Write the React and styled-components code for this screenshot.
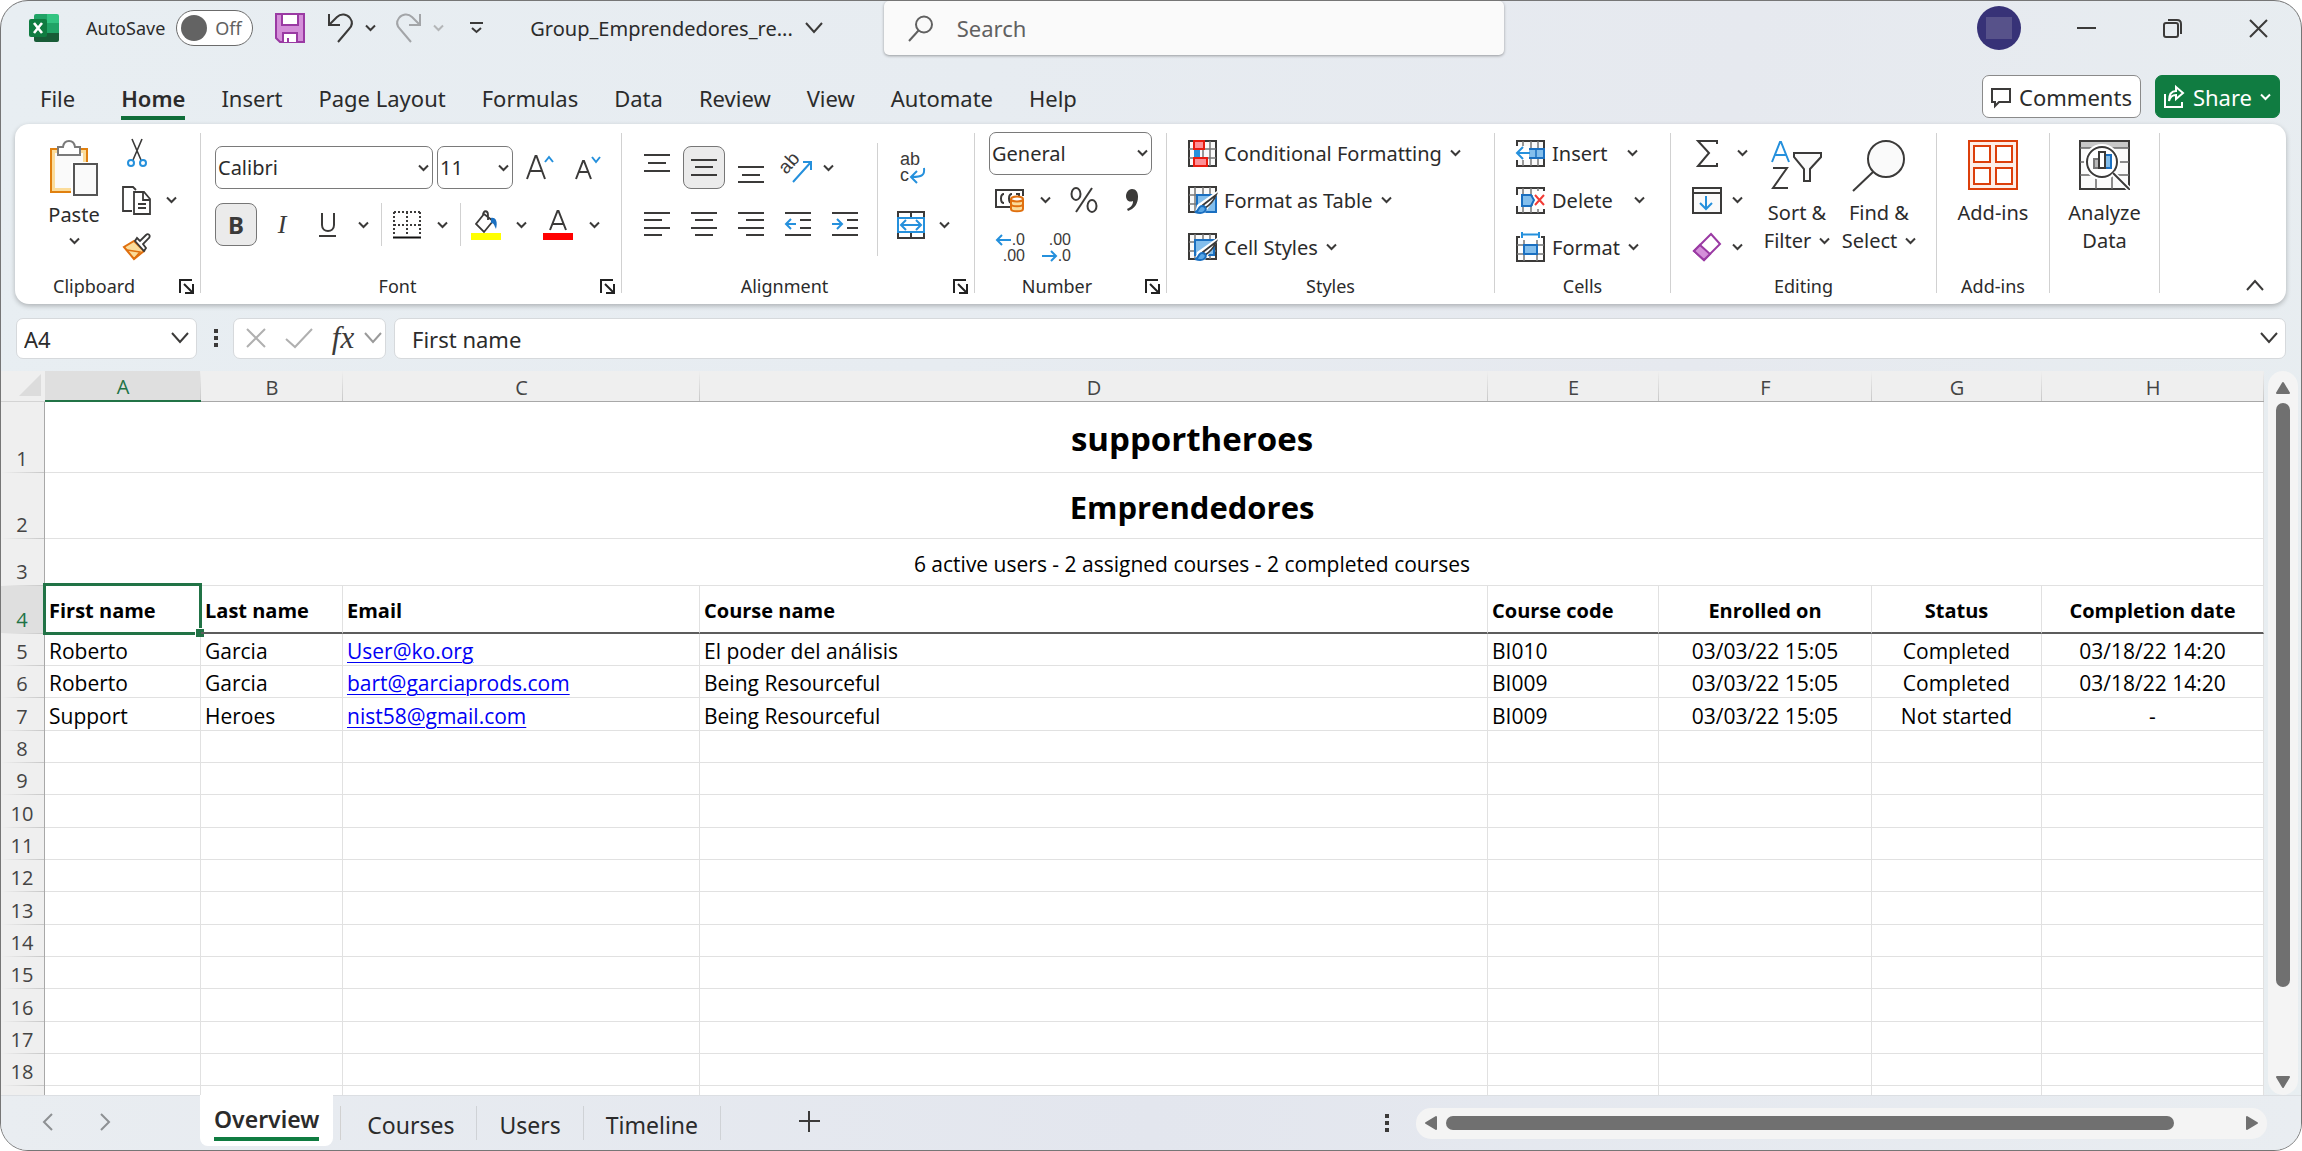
import React, { useState } from "react";
import styled, { createGlobalStyle, css } from "styled-components";

const ui = `"Noto Sans", "Open Sans", sans-serif`;
const cellFont = `"Open Sans", "Noto Sans", sans-serif`;
const iconFont = `"Liberation Sans", sans-serif`;
const ink = "#3b3a39";
const blue = "#2590dc";
const green = "#107c41";

const GlobalStyle = createGlobalStyle`
  * {
    box-sizing: border-box;
  }
  body {
    margin: 0;
    background: #fff;
    font-family: ${ui};
    color: #2b2b2b;
  }
  button, input, select {
    font-family: inherit;
    color: inherit;
    padding: 0;
    margin: 0;
    border: 0;
    background: none;
  }
  svg {
    display: block;
    flex: none;
    overflow: visible;
  }
`;

const Window = styled.div`
  display: flex;
  flex-direction: column;
  height: 100vh;
  border: 1px solid #767676;
  border-radius: 28px;
  overflow: hidden;
  background: linear-gradient(100deg, #e8eef2 0%, #e7ecf1 40%, #e6e9ef 70%, #e8eef1 100%);
`;

/* title bar */
const TitleBar = styled.header`
  display: flex;
  align-items: center;
  height: 54px;
  padding-left: 28px;
  font-size: 18px;
`;
const AutoSave = styled.label`
  display: flex;
  align-items: center;
  gap: 11px;
  margin: 0 10px 0 27px;
`;
const Track = styled.span`
  position: relative;
  display: flex;
  align-items: center;
  gap: 8px;
  width: 77px;
  height: 36px;
  padding-left: 4px;
  border: 1px solid #6b6b6b;
  border-radius: 18px;
  background: #fff;
  color: #616161;
  &::before {
    content: "";
    width: 26px;
    height: 26px;
    border-radius: 50%;
    background: #636363;
  }
`;
const TrackInput = styled.input`
  position: absolute;
  inset: 0;
  width: 100%;
  height: 100%;
  opacity: 0;
`;
const IconButton = styled.button`
  display: flex;
  flex: none;
  align-items: center;
  justify-content: center;
  width: ${({ $w }) => $w || 42}px;
  height: ${({ $h }) => $h || 42}px;
  ${({ $on }) =>
    $on &&
    css`
      background: #ebebeb;
      border: 1px solid #767676;
      border-radius: 8px;
    `}
`;
const SplitButton = styled.div`
  display: flex;
  margin-right: 8px;
`;
const FileName = styled.button`
  display: flex;
  align-items: center;
  gap: 12px;
  margin: 0 61px 0 31px;
  font-size: 20px;
  white-space: nowrap;
`;
const Search = styled.label`
  display: flex;
  align-items: center;
  gap: 24px;
  flex: 0 1 620px;
  height: 54px;
  padding-left: 24px;
  background: #fafafa;
  border-radius: 5px;
  box-shadow: 0 1px 3px rgba(0, 0, 0, 0.35);
`;
const SearchInput = styled.input`
  flex: 1;
  font-size: 22px;
  outline: none;
  &::placeholder {
    color: #616161;
    opacity: 1;
  }
`;
const Controls = styled.div`
  display: flex;
  align-items: center;
  margin-left: auto;
`;
const Avatar = styled.button`
  display: grid;
  place-items: center;
  width: 44px;
  height: 44px;
  margin-right: 22px;
  border-radius: 50%;
  background: #373277;
  &::before {
    content: "";
    width: 26px;
    height: 22px;
    background: #57528a;
  }
`;

/* tabs */
const TabBar = styled.nav`
  display: flex;
  align-items: center;
  height: 69px;
  padding: 0 21px 0 39px;
`;
const Tabs = styled.div`
  display: flex;
  gap: 36px;
  padding-top: 23px;
`;
const Tab = styled.button`
  font-size: 22px;
  line-height: 30px;
  padding-bottom: 3px;
  margin-left: ${({ $active }) => ($active ? 10 : 0)}px;
  font-weight: ${({ $active }) => ($active ? 600 : 400)};
  border-bottom: 4px solid ${({ $active }) => ($active ? "#0f6d39" : "transparent")};
`;
const TabActions = styled.div`
  display: flex;
  gap: 14px;
  margin-left: auto;
  padding-top: 14px;
`;
const Action = styled.button`
  display: flex;
  align-items: center;
  gap: 8px;
  height: 43px;
  padding: 0 8px;
  font-size: 22px;
  border-radius: 7px;
  border: 1px solid ${({ $primary }) => ($primary ? green : "#8a8a8a")};
  background: ${({ $primary }) => ($primary ? green : "#fff")};
  color: ${({ $primary }) => ($primary ? "#fff" : "#2b2b2b")};
`;

/* ribbon */
const Ribbon = styled.section`
  display: flex;
  margin: 0 15px 0 14px;
  padding: 9px 0 11px;
  height: 180px;
  flex: none;
  background: #fff;
  border-radius: 14px;
  box-shadow: 0 2px 5px rgba(0, 0, 0, 0.25);
`;
const Group = styled.div`
  display: flex;
  flex-direction: column;
  flex: none;
  width: ${({ $w }) => $w}px;
  border-right: 1px solid #d1d1d1;
`;
const Body = styled.div`
  display: flex;
  flex: 1;
  padding-left: ${({ $left }) => $left || 0}px;
`;
const Centered = styled(Body)`
  justify-content: center;
`;
const GroupFoot = styled.div`
  display: flex;
  align-items: center;
  height: 20px;
  margin-bottom: -3px;
  font-size: 18px;
`;
const GroupLabel = styled.span`
  flex: 1;
  text-align: center;
  line-height: 20px;
`;
const Rows = styled.div`
  display: flex;
  flex-direction: column;
  gap: 7px;
`;
const TwoRows = styled(Rows)`
  gap: 14px;
  padding-top: 13px;
`;
const Row = styled.div`
  display: flex;
  align-items: center;
  height: 40px;
`;
const TallRow = styled(Row)`
  height: 43px;
`;
const AlignRow = styled(TallRow)`
  gap: 5px;
  width: 241px;
`;
const Rule = styled.span`
  flex: none;
  width: 1px;
  height: ${({ $h }) => $h}px;
  margin: ${({ $h }) => ($h > 50 ? "10px 14px 0 0" : "0 4px")};
  background: #d1d1d1;
`;
const BigButton = styled.button`
  display: flex;
  flex-direction: column;
  align-items: center;
  width: ${({ $w }) => $w}px;
  padding-top: 7px;
  font-size: 20px;
  line-height: 28px;
  > svg:first-child {
    margin-bottom: 7px;
  }
`;
const PasteButton = styled(BigButton)`
  > svg:first-child {
    margin-bottom: 5px;
  }
`;
const PasteText = styled.span`
  padding-bottom: 8px;
`;
const TextLine = styled.span`
  display: flex;
  align-items: center;
  justify-content: center;
  gap: 8px;
`;
const ItemButton = styled.button`
  display: flex;
  align-items: center;
  gap: 7px;
  height: 40px;
  font-size: 20px;
  white-space: nowrap;
`;
const ItemText = styled.span`
  display: flex;
  align-items: center;
  gap: 8px;
`;
const Combo = styled.span`
  display: inline-grid;
  align-items: center;
  width: ${({ $w }) => $w}px;
  height: 43px;
  margin-right: 4px;
  svg {
    grid-area: 1 / 1;
    justify-self: end;
    margin-right: 4px;
    pointer-events: none;
  }
`;
const Select = styled.select`
  grid-area: 1 / 1;
  height: 43px;
  padding-left: 2px;
  appearance: none;
  border: 1px solid #7a7a7a;
  border-radius: 7px;
  background: #fff;
  font-size: 20px;
`;
const Letter = styled.span`
  font-size: ${({ $size }) => $size || 24}px;
  line-height: 26px;
  font-weight: ${({ $bold }) => ($bold ? 700 : 400)};
  font-style: ${({ $italic }) => ($italic ? "italic" : "normal")};
  font-family: ${({ $serif }) => ($serif ? `"Liberation Serif", serif` : ui)};
  color: ${ink};
`;
const Collapse = styled.button`
  align-self: flex-end;
  margin: 0 22px 2px auto;
`;

/* formula bar */
const FormulaBar = styled.div`
  display: flex;
  align-items: center;
  height: 67px;
  flex: none;
  padding: 1px 15px 0 15px;
`;
const Field = styled.div`
  display: flex;
  align-items: center;
  height: 41px;
  background: #fff;
  border: 1px solid #d6d9dc;
  border-radius: 7px;
  ${({ $w }) => ($w ? `width: ${$w}px;` : "flex: 1;")}
  margin-right: ${({ $gap }) => $gap || 0}px;
  padding: 0 ${({ $pad }) => $pad || 7}px;
`;
const FieldInput = styled.input`
  flex: 1;
  min-width: 0;
  font-size: 22px;
  padding-top: 2px;
  padding-left: ${({ $left }) => $left || 0}px;
  outline: none;
`;
const Grip = styled.span`
  margin-right: 14px;
`;

/* sheet */
const Sheet = styled.main`
  display: flex;
  flex: 1;
  min-height: 0;
`;
const Grid = styled.div`
  flex: 1;
  overflow: hidden;
  background: #fff;
`;
const Table = styled.table`
  width: 100%;
  table-layout: fixed;
  border-collapse: separate;
  border-spacing: 0;
  font-family: ${cellFont};
  color: #000;
`;
const Col = styled.col`
  width: ${({ $w }) => ($w ? `${$w}px` : "auto")};
`;
const ColHead = styled.th`
  height: 31px;
  padding: 3px 0 0;
  font-size: 20px;
  line-height: 26px;
  font-weight: 400;
  color: ${({ $active }) => ($active ? "#217346" : "#444")};
  border-bottom: ${({ $active }) => ($active ? "2px solid #217346" : "1px solid #a8a8a8")};
  background: linear-gradient(#efefef, #c8c8c8) right / 1px 100% no-repeat,
    ${({ $active }) => ($active ? "#dfdfdf" : "#efefef")};
`;
const Corner = styled.th`
  padding: 0 4px 2px 0;
  background: #efefef;
  border-bottom: 1px solid #d4d4d4;
  svg {
    margin-left: auto;
  }
`;
const RowHead = styled.th`
  height: ${({ $h }) => $h}px;
  padding: 0 1px 0 0;
  vertical-align: bottom;
  font-size: 20px;
  line-height: 28px;
  font-weight: 400;
  color: ${({ $active }) => ($active ? "#217346" : "#444")};
  border-right: 1px solid #a8a8a8;
  background: linear-gradient(90deg, #efefef, #c8c8c8) bottom / 100% 1px no-repeat,
    ${({ $active }) => ($active ? "#dfdfdf" : "#efefef")};
`;
const Cell = styled.td`
  padding: 3px 4px 0;
  font-size: 21px;
  line-height: 26px;
  white-space: nowrap;
  text-align: ${({ $center }) => ($center ? "center" : "left")};
  border-right: 1px solid #e1e1e1;
  border-bottom: 1px solid #e1e1e1;
`;
const HeadCell = styled(Cell)`
  position: relative;
  font-size: 20px;
  font-weight: 700;
  border-bottom: 2px solid #5c5c5c;
`;
/* the merge runs on into the column beyond the right edge */
const MergedCell = styled(Cell)`
  padding: 3px 0 0 76px;
  text-align: center;
  font-size: ${({ $size }) => $size}px;
  font-weight: ${({ $bold }) => ($bold ? 700 : 400)};
`;
const Selection = styled.span`
  position: absolute;
  inset: -3px -2px -3px -2px;
  border: 3px solid #217346;
  &::after {
    content: "";
    position: absolute;
    right: -5px;
    bottom: -5px;
    width: 8px;
    height: 8px;
    background: #217346;
    border: solid #fff;
    border-width: 1px 0 0 1px;
  }
`;
const MailLink = styled.a`
  color: #0000f5;
  text-decoration: underline;
  text-decoration-thickness: 1px;
  text-underline-offset: 3px;
`;

/* scroll bars */
const VScroll = styled.div`
  display: flex;
  flex-direction: column;
  align-items: center;
  justify-content: space-between;
  width: 30px;
  margin: 0 3px 0 4px;
  padding: 10px 0 6px;
  border-radius: 15px;
  background: #f4f4f4;
`;
const HScroll = styled.div`
  display: flex;
  align-items: center;
  justify-content: space-between;
  flex: 0 1 851px;
  height: 31px;
  padding: 0 8px;
  border-radius: 15px;
  background: #f4f4f4;
`;
const Rail = styled.div`
  display: flex;
  flex-direction: ${({ $vertical }) => ($vertical ? "column" : "row")};
  flex: 1;
  margin: ${({ $vertical }) => ($vertical ? "8px 0" : "0 8px")};
`;
const Thumb = styled.div`
  flex: 0 0 ${({ $size }) => $size}%;
  min-width: 14px;
  min-height: 14px;
  border-radius: 7px;
  background: #707070;
`;

/* sheet tabs */
const Footer = styled.footer`
  display: flex;
  align-items: center;
  height: 55px;
  flex: none;
  padding-right: 34px;
  background: linear-gradient(90deg, #e9edf1, #e3e6ee 50%, #e9edf1);
  border-top: 1px solid #dcdfe3;
`;
const Pager = styled.div`
  display: flex;
  width: 199px;
  padding: 0 0 2px 24px;
  gap: 14px;
`;
const SheetTab = styled.button`
  height: 34px;
  padding: 4px 22px 0;
  font-size: 23px;
  line-height: 30px;
  border-right: 1px solid #cfd2d6;
`;
const ActiveTab = styled.button`
  align-self: flex-start;
  height: 51px;
  margin: -1px 3px 0 0;
  padding: 0 14px 2px;
  background: #fff;
  border-radius: 0 0 8px 8px;
  font-size: 23px;
  font-weight: 600;
`;
const Underlined = styled.span`
  display: block;
  line-height: 30px;
  padding: 5px 0 3px;
  border-bottom: 4px solid ${green};
`;
const NewSheet = styled.button`
  margin: 0 auto 3px 78px;
`;
const ScrollDots = styled.span`
  margin-right: 26px;
`;

const Svg = ({ w = 29, h = 27, vb, children, ...rest }) => (
  <svg
    width={w}
    height={h}
    viewBox={vb || `0 0 ${w} ${h}`}
    fill="none"
    stroke={ink}
    strokeWidth="2"
    aria-hidden="true"
    {...rest}
  >
    {children}
  </svg>
);

const Chevron = ({ color = ink, size = 11 }) => (
  <Svg w={size} h={8} vb="0 0 11 8" stroke={color} strokeWidth={2}>
    <path d="M1 1.5 5.5 6 10 1.5" />
  </Svg>
);
const WideChevron = ({ color = ink, flip }) => (
  <Svg w={18} h={12} stroke={color} strokeWidth={2}>
    <path d={flip ? "M1 11 9 2 17 11" : "M1 1 9 10 17 1"} />
  </Svg>
);
const Dots = () => (
  <Svg w={5} h={20} stroke="none" fill={ink}>
    <path d="M0 1h4v4H0zM0 8h4v4H0zM0 15h4v4H0z" />
  </Svg>
);
const Triangle = ({ d }) => (
  <Svg w={14} h={14} fill="#707070" stroke="#707070" strokeLinejoin="round">
    <path d={d} />
  </Svg>
);
const IconText = ({ children, ...rest }) => (
  <text fontFamily={iconFont} fontSize="14" fill={ink} stroke="none" {...rest}>
    {children}
  </text>
);

const ExcelLogo = () => (
  <Svg w={30} h={30} stroke="none">
    <path d="M7 1h12v9H5V3q0-2 2-2z" fill="#21a366" />
    <path d="M18 1h10q2 0 2 2v7H18z" fill="#33c481" />
    <path d="M5 10h13v10H5z" fill="#107c41" />
    <path d="M18 10h12v10H18z" fill="#21a366" />
    <path d="M5 20h25v7q0 2-2 2H7q-2 0-2-2z" fill="#185c37" />
    <path d="M18 20V10h-4v10z" fill="#107c41" />
    <rect y="6" width="18" height="18" rx="2" fill="#107c41" />
    <path d="m5 10 8 10M13 10 5 20" stroke="#fff" strokeWidth="2.6" />
  </Svg>
);
const SaveIcon = () => (
  <Svg w={30} h={30} stroke="#9a3aa3" fill="#d48fd9">
    <path d="M1 1h28v28H5l-4-4z" />
    <path d="M7 1h16v11H7z" fill="#fff" />
    <path d="M8 29v-9h14v9M13 29v-4" fill="#fff" />
  </Svg>
);
const UndoIcon = () => (
  <Svg w={27} h={30}>
    <path d="M2 1v11h11M2 12 10 4c4-4 10-3 13 1s2 8-1 11L11 29" />
  </Svg>
);
const RedoIcon = () => (
  <Svg w={27} h={30} stroke="#a3a5a8">
    <path d="M25 1v11H14M25 12l-8-8c-4-4-10-3-13 1s-2 8 1 11l11 13" />
  </Svg>
);
const SearchIcon = () => (
  <Svg w={25} h={27} stroke="#616161">
    <circle cx="16" cy="9.5" r="8" />
    <path d="M10.5 15.5 1 26" />
  </Svg>
);
const PasteIcon = () => (
  <Svg w={50} h={56}>
    <path d="M2 9h36v43H2z" fill="#fbdc9b" stroke="#e0800f" />
    <path d="M6 13h28v35H6z" fill="#fafafa" stroke="none" />
    <path d="M9 7h5c1-8 11-8 12 0h5v8H9z" fill="#fff" stroke="#7a7a7a" />
    <path d="M22 22h28v34H22z" fill="#fff" stroke="none" />
    <path d="M25 24h23v31H25z" fill="#fafafa" stroke="#555" />
  </Svg>
);
const CutIcon = () => (
  <Svg w={20} h={28} strokeWidth="1.6">
    <path d="M5 0 14 21M15 0 6 21" />
    <circle cx="4" cy="24" r="3" stroke={blue} strokeWidth="2" />
    <circle cx="16" cy="24" r="3" stroke={blue} strokeWidth="2" />
  </Svg>
);
const CopyIcon = () => (
  <Svg w={30} h={29} strokeWidth="1.8">
    <path d="M10 25H1V1h10l3 3" />
    <path d="M12 6h10l6 7v15H12zM21 6v8h7M16 18h8M16 22h8" />
  </Svg>
);
const BrushIcon = () => (
  <Svg w={30} h={28}>
    <path d="M2 14 12 26 22 18 12 8z" fill="#fbdc9b" stroke="#e0700f" />
    <path d="m5 17 13 2-6 7" stroke="#e0700f" strokeWidth="1.6" />
    <path d="M13 8 22 18l2-3-3-4 6-6c2-3-1-5-3-3l-6 6-3-3z" fill="#fff" strokeWidth="1.8" />
  </Svg>
);
const Launcher = () => (
  <Svg w={15} h={15} stroke="#222">
    <path d="M1 14V1h12M5 5l8 8M14 5v9H6" />
  </Svg>
);
const BordersIcon = () => (
  <Svg w={28} h={28}>
    <path d="M1 1h26M1 14h26M1 1v23M14 1v23M27 1v23" strokeDasharray="2 2" />
    <path d="M0 26.5h28" stroke="#111" />
  </Svg>
);
const FillIcon = () => (
  <Svg w={30} h={30}>
    <path d="M13 4 5 14l8 8 9-11zM12 5c0-5 5-5 5 0v5" strokeWidth="1.8" />
    <path d="M20 8c5-1 7 4 5 11-2-4-2-6-5-6z" fill="#1a6fc0" stroke="none" />
    <path d="M0 23h30v7H0z" fill="#ffff00" stroke="none" />
  </Svg>
);
const FontColorIcon = () => (
  <Svg w={30} h={30}>
    <path d="M7 20 14.5 1h1L23 20M9.5 14h11" />
    <path d="M0 23h30v7H0z" fill="#ff0000" stroke="none" />
  </Svg>
);
const GrowIcon = () => (
  <Svg w={28} h={26}>
    <path d="M1 24 9.5 1h1L19 24M4 16h12" />
    <path d="m19 7 4-5 4 5" stroke={blue} />
  </Svg>
);
const ShrinkIcon = () => (
  <Svg w={26} h={26}>
    <path d="M1 24 8 6h1l7 18M4 17h9" />
    <path d="m17 2 4 5 4-5" stroke={blue} />
  </Svg>
);

const lineSets = {
  top: [[0, 26, 1], [4, 18, 9], [0, 26, 17]],
  middle: [[0, 26, 6], [4, 18, 13], [0, 26, 21]],
  bottom: [[0, 26, 13], [4, 18, 21], [0, 26, 28]],
  left: [[0, 26, 2], [0, 18, 9], [0, 26, 17], [0, 18, 24]],
  center: [[0, 26, 2], [4, 18, 9], [0, 26, 17], [4, 18, 24]],
  right: [[0, 26, 2], [8, 18, 9], [0, 26, 17], [8, 18, 24]],
  indent: [[0, 26, 2], [15, 11, 9], [15, 11, 17], [0, 26, 24]],
};
const LinesIcon = ({ kind, children }) => (
  <Svg w={26} h={30}>
    <path d={lineSets[kind].map(([x, w, y]) => `M${x} ${y + 1}h${w}`).join("")} />
    {children}
  </Svg>
);
const OrientIcon = () => (
  <Svg w={31} h={31}>
    <IconText x="2" y="20" transform="rotate(-48 6 20)" fontSize="19">ab</IconText>
    <path d="M10 30 28 10M20 10h8v8" stroke={blue} />
  </Svg>
);
const WrapIcon = () => (
  <Svg w={26} h={33}>
    <IconText x="0" y="14" fontSize="18">ab</IconText>
    <IconText x="0" y="30" fontSize="18">c</IconText>
    <path d="M24 17c1 7-2 9-12 9M17 20l-6 6 6 6" stroke={blue} />
  </Svg>
);
const MergeIcon = () => (
  <Svg w={28} h={28}>
    <path d="M1 1h26v26H1zM14 1v6M14 21v6" />
    <path d="M1 7h26v14H1z" fill="#fff" stroke={blue} />
    <path d="M5 14h18M9 9l-5 5 5 5M19 9l5 5-5 5" stroke={blue} />
  </Svg>
);
const MoneyIcon = () => (
  <Svg w={30} h={25}>
    <path d="M28 8V2H1v17h14M9 6C5 6 5 15 9 15M17 6c-4 0-4 9 0 9" />
    <path d="M21 6h3v3" />
    <path d="M16 11v10c0 3 12 3 12 0V11" fill="#fbdc9b" stroke="#e0700f" />
    <ellipse cx="22" cy="11" rx="6" ry="2.5" fill="#fff" stroke="#e0700f" />
    <path d="M16 16c0 3 12 3 12 0" stroke="#e0700f" />
  </Svg>
);
const PercentIcon = () => (
  <Svg w={28} h={26}>
    <ellipse cx="6" cy="7" rx="4.5" ry="6" />
    <ellipse cx="22" cy="19" rx="4.5" ry="6" />
    <path d="M22 1 6 25" />
  </Svg>
);
const CommaIcon = () => (
  <Svg w={14} h={24} fill={ink} stroke="none">
    <path d="M7 1c4 0 6 3 6 8 0 7-4 12-10 14l-1-2c4-2 6-4 6-8-5 2-7-2-7-5s2-7 6-7z" />
  </Svg>
);
const DecimalIcon = ({ more }) => (
  <Svg w={29} h={33}>
    <IconText x="29" y="14" fontSize="16" textAnchor="end">{more ? ".0" : ".00"}</IconText>
    <IconText x="29" y="30" fontSize="16" textAnchor="end">{more ? ".00" : ".0"}</IconText>
    <path d={more ? "M15 9H1M6 4 1 9l5 5" : "M0 25h14M9 20l5 5-5 5"} stroke={blue} />
  </Svg>
);
const GridBase = () => (
  <>
    <path d="M1 1h27v25H1z" fill="#fafafa" />
    <path d="M7 1v25M15 1v25M22 1v25M1 9h27M1 18h27" stroke="#777" strokeWidth="1.5" />
  </>
);
const CondIcon = () => (
  <Svg>
    <GridBase />
    <path d="M6 1h10v8H6zM6 18h13v8H6z" fill="#fd9096" stroke="#e81c10" />
    <path d="M6 10h6v7H6z" fill={blue} stroke="none" />
  </Svg>
);
const PenShape = () => (
  <>
    <path d="M29 5v4L17 27H7l2-8z" fill="#fff" stroke="none" />
    <path d="M28 9 15 19l2 3c5-3 9-8 11-13z" fill="#fff" strokeWidth="1.8" />
    <path d="M7 26c4 0 3-6 7-6s5 4 2 6-6 1-9 0z" fill="#5aa7e6" stroke="#1a6fc0" />
  </>
);
const TableFmtIcon = () => (
  <Svg h={28}>
    <GridBase />
    <path d="M9 9h19v17H9z" fill="#83beec" stroke="#1a6fc0" />
    <PenShape />
  </Svg>
);
const CellStyleIcon = () => (
  <Svg h={28}>
    <GridBase />
    <path d="M7 7h19v15H7z" fill="#83beec" stroke="#1a6fc0" />
    <PenShape />
  </Svg>
);
const InsertIcon = () => (
  <Svg>
    <GridBase />
    <path d="M12 9h16v9H12z" fill="#83beec" stroke="#1a6fc0" />
    <path d="M20 9v9" stroke="#1a6fc0" strokeWidth="1.5" />
    <path d="M0 6h13v14H0z" fill="#fff" stroke="none" />
    <path d="M1 13h13M7 7l-6 6 6 6" stroke={blue} />
  </Svg>
);
const DeleteIcon = () => (
  <Svg>
    <GridBase />
    <path d="M0 8h5v11H0zM17 4h12v18H17z" fill="#fff" stroke="none" />
    <path d="M6 8h9l3 5-3 6H6z" fill="#83beec" stroke="#1a6fc0" />
    <path d="m19 8 9 10M28 8l-9 10" stroke="#f23c36" />
  </Svg>
);
const FormatIcon = () => (
  <Svg h={30}>
    <path d="M4 5H1v24h27V5h-3" />
    <path d="M8 8v21M21 8v21M1 13h27M1 22h27" stroke="#777" strokeWidth="1.5" />
    <path d="M8 13h13v9H8z" fill="#83beec" stroke="#1a6fc0" />
    <path d="M6 2.5h17M6 0v6M23 0v6" stroke={blue} />
  </Svg>
);
const SumIcon = () => (
  <Svg w={22} h={27}>
    <path d="M21 4V1H2l11 12L2 26h19v-3" />
  </Svg>
);
const FillDownIcon = () => (
  <Svg w={30} h={27}>
    <path d="M1 1h28v25H1zM1 6h28" fill="#fafafa" />
    <path d="M14 9v13M8 16l6 6 6-6" stroke={blue} />
  </Svg>
);
const EraserIcon = () => (
  <Svg w={28} h={28} stroke="#9a3aa3">
    <path d="M18 1 27 11 11 27 1 18z" fill="#fff" />
    <path d="M7 12 17 21 11 27 1 18z" fill="#d48fd9" />
  </Svg>
);
const SortIcon = () => (
  <Svg w={52} h={52}>
    <path d="M1 22 9 2h1l8 20M4 15h11" stroke={blue} />
    <path d="M2 28h14L2 48h15" />
    <path d="M23 13h27v4L39 29v12h-6V29L23 17z" fill="#fafafa" />
  </Svg>
);
const FindIcon = () => (
  <Svg w={54} h={52}>
    <circle cx="34" cy="19" r="18" fill="#fafafa" />
    <path d="M21 32 1 51" />
  </Svg>
);
const AddInsIcon = () => (
  <Svg w={50} h={52} stroke="#dc3f0b">
    <path d="M1 1h48v48H1z" fill="#fdeee8" />
    <path d="M6 6h16v16H6zM28 6h16v16H28zM6 28h16v16H6zM28 28h16v16H28z" fill="#fff" />
  </Svg>
);
const AnalyzeIcon = () => (
  <Svg w={51} h={52}>
    <path d="M1 1h49v48H1z" fill="#fafafa" />
    <path d="M2 2h47v6H2z" fill="#c8c8c8" stroke="none" />
    <path d="M1 8h49M1 22h49M1 35h49M17 35v14M33 35v14" strokeWidth="1.5" stroke="#666" />
    <circle cx="23" cy="22" r="18" fill="#fff" stroke="none" />
    <circle cx="23" cy="22" r="15" fill="#fff" />
    <path d="M15 19h5v9h-5z" fill="#b8b8b8" stroke="#777" />
    <path d="M26 15h6v13h-6z" fill="#83beec" stroke="#1a6fc0" />
    <path d="M20 12h6v16h-6z" fill="#fff" />
    <path d="m34 33 16 16" stroke="#fff" strokeWidth="5" />
    <path d="m34 33 16 16" />
  </Svg>
);

const columns = [
  { id: "A", w: 156 },
  { id: "B", w: 142 },
  { id: "C", w: 357 },
  { id: "D" },
  { id: "E", w: 171 },
  { id: "F", w: 213 },
  { id: "G", w: 170 },
  { id: "H", w: 222 },
];
const headings = [
  "First name", "Last name", "Email", "Course name",
  "Course code", "Enrolled on", "Status", "Completion date",
];
const people = [
  ["Roberto", "Garcia", "User@ko.org", "El poder del análisis", "BI010", "03/03/22 15:05", "Completed", "03/18/22 14:20"],
  ["Roberto", "Garcia", "bart@garciaprods.com", "Being Resourceful", "BI009", "03/03/22 15:05", "Completed", "03/18/22 14:20"],
  ["Support", "Heroes", "nist58@gmail.com", "Being Resourceful", "BI009", "03/03/22 15:05", "Not started", "-"],
];
const lastRow = 18;
const rowHeight = (n) => (n % 3 === 1 ? 33 : 32);
const tabs = ["File", "Home", "Insert", "Page Layout", "Formulas", "Data", "Review", "View", "Automate", "Help"];

const Tool = ({ label, ...rest }) => <IconButton aria-label={label} title={label} {...rest} />;
const Arrow = ({ label, w = 28, color }) => (
  <IconButton aria-label={label} $w={w}>
    <Chevron color={color} />
  </IconButton>
);
const Foot = ({ children, launcher }) => (
  <GroupFoot>
    <GroupLabel>{children}</GroupLabel>
    {launcher && (
      <IconButton aria-label={`${children} settings`} $w={27} $h={20}>
        <Launcher />
      </IconButton>
    )}
  </GroupFoot>
);
const Dropdown = ({ label, w, options }) => (
  <Combo $w={w}>
    <Select aria-label={label}>
      {options.map((o) => (
        <option key={o}>{o}</option>
      ))}
    </Select>
    <Chevron />
  </Combo>
);

const RibbonGroups = () => (
  <Ribbon>
    <Group $w={186}>
      <Body $left={26}>
        <PasteButton $w={66}>
          <PasteIcon />
          <PasteText>Paste</PasteText>
          <Chevron />
        </PasteButton>
        <Rows>
          <Row><Tool label="Cut" $w={60}><CutIcon /></Tool></Row>
          <Row>
            <Tool label="Copy" $w={60}><CopyIcon /></Tool>
            <Arrow label="Copy options" w={8} />
          </Row>
          <Row><Tool label="Format Painter" $w={60}><BrushIcon /></Tool></Row>
        </Rows>
      </Body>
      <Foot launcher>Clipboard</Foot>
    </Group>

    <Group $w={421}>
      <Body $left={14}>
        <TwoRows>
          <TallRow>
            <Dropdown label="Font" w={218} options={["Calibri", "Arial"]} />
            <Dropdown label="Font size" w={76} options={["11", "12", "14"]} />
            <Tool label="Increase Font Size" $w={46}><GrowIcon /></Tool>
            <Tool label="Decrease Font Size" $w={50}><ShrinkIcon /></Tool>
          </TallRow>
          <TallRow>
            <Tool label="Bold" $on $h={43}><Letter $bold>B</Letter></Tool>
            <Tool label="Italic" $w={50}><Letter $serif $italic $size={26}>I</Letter></Tool>
            <Tool label="Underline">
              <Svg w={18} h={26}><path d="M3 1v12c0 8 12 8 12 0V1M0 24h17" /></Svg>
            </Tool>
            <Arrow label="Underline options" />
            <Rule $h={43} />
            <Tool label="Borders"><BordersIcon /></Tool>
            <Arrow label="Border options" />
            <Rule $h={43} />
            <Tool label="Fill Color"><FillIcon /></Tool>
            <Arrow label="Fill options" />
            <Tool label="Font Color" $w={46}><FontColorIcon /></Tool>
            <Arrow label="Font color options" w={26} />
          </TallRow>
        </TwoRows>
      </Body>
      <Foot launcher>Font</Foot>
    </Group>

    <Group $w={353}>
      <Body $left={14}>
        <TwoRows>
          <AlignRow>
            <Tool label="Top Align"><LinesIcon kind="top" /></Tool>
            <Tool label="Middle Align" $on $h={43}><LinesIcon kind="middle" /></Tool>
            <Tool label="Bottom Align"><LinesIcon kind="bottom" /></Tool>
            <Tool label="Orientation"><OrientIcon /></Tool>
            <Arrow label="Orientation options" w={9} />
          </AlignRow>
          <AlignRow>
            <Tool label="Align Left"><LinesIcon kind="left" /></Tool>
            <Tool label="Center"><LinesIcon kind="center" /></Tool>
            <Tool label="Align Right"><LinesIcon kind="right" /></Tool>
            <Tool label="Decrease Indent">
              <LinesIcon kind="indent"><path d="M11 14H1M6 9l-5 5 5 5" stroke={blue} /></LinesIcon>
            </Tool>
            <Tool label="Increase Indent">
              <LinesIcon kind="indent"><path d="M0 14h10M5 9l5 5-5 5" stroke={blue} /></LinesIcon>
            </Tool>
          </AlignRow>
        </TwoRows>
        <Rule $h={113} />
        <TwoRows>
          <TallRow><Tool label="Wrap Text"><WrapIcon /></Tool></TallRow>
          <TallRow>
            <Tool label="Merge & Center" $w={38}><MergeIcon /></Tool>
            <Arrow label="Merge options" />
          </TallRow>
        </TwoRows>
      </Body>
      <Foot launcher>Alignment</Foot>
    </Group>

    <Group $w={192}>
      <Body $left={14}>
        <Rows>
          <Row><Dropdown label="Number format" w={163} options={["General", "Number"]} /></Row>
          <Row>
            <Tool label="Accounting"><MoneyIcon /></Tool>
            <Arrow label="Accounting options" />
            <Tool label="Percent" $w={50}><PercentIcon /></Tool>
            <Tool label="Comma" $w={46}><CommaIcon /></Tool>
          </Row>
          <Row>
            <Tool label="Increase Decimal"><DecimalIcon more /></Tool>
            <Tool label="Decrease Decimal" $w={50}><DecimalIcon /></Tool>
          </Row>
        </Rows>
      </Body>
      <Foot launcher>Number</Foot>
    </Group>

    <Group $w={328}>
      <Body $left={21}>
        <Rows>
          <ItemButton><CondIcon /><ItemText>Conditional Formatting <Chevron /></ItemText></ItemButton>
          <ItemButton><TableFmtIcon /><ItemText>Format as Table <Chevron /></ItemText></ItemButton>
          <ItemButton><CellStyleIcon /><ItemText>Cell Styles <Chevron /></ItemText></ItemButton>
        </Rows>
      </Body>
      <Foot>Styles</Foot>
    </Group>

    <Group $w={176}>
      <Body $left={21}>
        <Rows>
          <Row>
            <ItemButton><InsertIcon />Insert</ItemButton>
            <Arrow label="Insert options" w={50} />
          </Row>
          <Row>
            <ItemButton><DeleteIcon />Delete</ItemButton>
            <Arrow label="Delete options" w={54} />
          </Row>
          <ItemButton><FormatIcon /><ItemText>Format <Chevron /></ItemText></ItemButton>
        </Rows>
      </Body>
      <Foot>Cells</Foot>
    </Group>

    <Group $w={266}>
      <Body $left={15}>
        <Rows>
          <Row><Tool label="AutoSum"><SumIcon /></Tool><Arrow label="Sum options" /></Row>
          <Row><Tool label="Fill"><FillDownIcon /></Tool><Arrow label="Fill options" w={18} /></Row>
          <Row><Tool label="Clear"><EraserIcon /></Tool><Arrow label="Clear options" w={18} /></Row>
        </Rows>
        <BigButton $w={82}>
          <SortIcon />
          <TextLine>Sort &amp;</TextLine>
          <TextLine>Filter <Chevron /></TextLine>
        </BigButton>
        <BigButton $w={82}>
          <FindIcon />
          <TextLine>Find &amp;</TextLine>
          <TextLine>Select <Chevron /></TextLine>
        </BigButton>
      </Body>
      <Foot>Editing</Foot>
    </Group>

    <Group $w={113}>
      <Centered>
        <BigButton $w={84}><AddInsIcon /><TextLine>Add-ins</TextLine></BigButton>
      </Centered>
      <Foot>Add-ins</Foot>
    </Group>

    <Group $w={110}>
      <Centered>
        <BigButton $w={84}><AnalyzeIcon /><TextLine>Analyze</TextLine><TextLine>Data</TextLine></BigButton>
      </Centered>
    </Group>

    <Collapse aria-label="Collapse ribbon"><WideChevron flip /></Collapse>
  </Ribbon>
);

const renderValue = (value, col) => (col === 2 ? <MailLink href={`mailto:${value}`}>{value}</MailLink> : value);

const Spreadsheet = () => {
  const rows = [];
  for (let n = 5; n <= lastRow; n++) rows.push(n);

  return (
    <Table>
      <colgroup>
        <Col $w={44} />
        {columns.map((c) => (
          <Col key={c.id} $w={c.w} />
        ))}
      </colgroup>
      <thead>
        <tr>
          <Corner aria-label="Select all">
            <Svg w={22} h={22} stroke="none" fill="#dcdcdc"><path d="M22 0v22H0z" /></Svg>
          </Corner>
          {columns.map((c) => (
            <ColHead key={c.id} $active={c.id === "A"}>{c.id}</ColHead>
          ))}
        </tr>
      </thead>
      <tbody>
        <tr>
          <RowHead $h={71}>1</RowHead>
          <MergedCell colSpan={8} $size={33} $bold>supportheroes</MergedCell>
        </tr>
        <tr>
          <RowHead $h={66}>2</RowHead>
          <MergedCell colSpan={8} $size={31} $bold>Emprendedores</MergedCell>
        </tr>
        <tr>
          <RowHead $h={47}>3</RowHead>
          <MergedCell colSpan={8} $size={21}>6 active users - 2 assigned courses - 2 completed courses</MergedCell>
        </tr>
        <tr>
          <RowHead $h={48} $active>4</RowHead>
          {headings.map((text, i) => (
            <HeadCell key={text} $center={i > 4}>
              {text}
              {i === 0 && <Selection />}
            </HeadCell>
          ))}
        </tr>
        {rows.map((n) => (
          <tr key={n}>
            <RowHead $h={rowHeight(n)}>{n}</RowHead>
            {columns.map((c, i) => (
              <Cell key={c.id} $center={i > 4}>
                {people[n - 5] && renderValue(people[n - 5][i], i)}
              </Cell>
            ))}
          </tr>
        ))}
        <tr>
          <RowHead $h={32} />
          {columns.map((c) => (
            <Cell key={c.id} />
          ))}
        </tr>
      </tbody>
    </Table>
  );
};

const App = () => {
  const [active, setActive] = useState("Home");

  return (
    <Window>
      <GlobalStyle />
      <TitleBar>
        <ExcelLogo />
        <AutoSave>
          AutoSave
          <Track>
            Off
            <TrackInput type="checkbox" />
          </Track>
        </AutoSave>
        <Tool label="Save" $w={54}><SaveIcon /></Tool>
        <SplitButton>
          <Tool label="Undo" $w={46}><UndoIcon /></Tool>
          <Arrow label="Undo options" w={14} />
        </SplitButton>
        <SplitButton>
          <Tool label="Redo" $w={46}><RedoIcon /></Tool>
          <Arrow label="Redo options" w={14} color="#b4b6b8" />
        </SplitButton>
        <Tool label="Customize toolbar" $w={46}>
          <Svg w={13} h={12}><path d="M0 1h13M2 6l4.5 4L11 6" /></Svg>
        </Tool>
        <FileName>
          Group_Emprendedores_re... <WideChevron />
        </FileName>
        <Search>
          <SearchIcon />
          <SearchInput type="text" placeholder="Search" aria-label="Search" />
        </Search>
        <Controls>
          <Avatar aria-label="Account" />
          <Tool label="Minimize" $w={86}><Svg w={19} h={18}><path d="M0 9h19" /></Svg></Tool>
          <Tool label="Restore" $w={86}>
            <Svg w={19} h={20}><rect x="1" y="5" width="14" height="14" rx="2" /><path d="M5 2h9q4 0 4 4v10" /></Svg>
          </Tool>
          <Tool label="Close" $w={86}><Svg w={19} h={19}><path d="m1 1 17 17M18 1 1 18" /></Svg></Tool>
        </Controls>
      </TitleBar>

      <TabBar>
        <Tabs>
          {tabs.map((t) => (
            <Tab key={t} $active={t === active} onClick={() => setActive(t)}>{t}</Tab>
          ))}
        </Tabs>
        <TabActions>
          <Action>
            <Svg w={20} h={20}><path d="M1 2h18v13H8l-4 4v-4H1z" /></Svg>
            Comments
          </Action>
          <Action $primary>
            <Svg w={21} h={22} stroke="#fff"><path d="M1 8v13h17v-5M12 1l7 6-7 6V9C8 9 6 11 5 15c0-6 2-10 7-10z" /></Svg>
            Share <Chevron color="#fff" />
          </Action>
        </TabActions>
      </TabBar>

      <RibbonGroups />

      <FormulaBar>
        <Field $w={181} $gap={17}>
          <FieldInput aria-label="Name box" defaultValue="A4" />
          <WideChevron />
        </Field>
        <Grip><Dots /></Grip>
        <Field $w={153} $gap={8} $pad={2}>
          <IconButton aria-label="Cancel" $w={40} $h={38}>
            <Svg w={20} h={20} stroke="#b0b0b0"><path d="m1 1 18 18M19 1 1 19" /></Svg>
          </IconButton>
          <IconButton aria-label="Enter" $w={46} $h={38}>
            <Svg w={28} h={20} stroke="#b0b0b0"><path d="m1 11 9 8L27 1" /></Svg>
          </IconButton>
          <IconButton aria-label="Insert function" $w={42} $h={38}>
            <Letter $serif $italic $size={31}>fx</Letter>
          </IconButton>
          <WideChevron color="#9a9a9a" />
        </Field>
        <Field>
          <FieldInput aria-label="Formula bar" defaultValue="First name" $left={10} />
          <WideChevron />
        </Field>
      </FormulaBar>

      <Sheet>
        <Grid>
          <Spreadsheet />
        </Grid>
        <VScroll>
          <Triangle d="M7 2 13 12H1z" />
          <Rail $vertical><Thumb $size={88} /></Rail>
          <Triangle d="M1 2h12L7 12z" />
        </VScroll>
      </Sheet>

      <Footer>
        <Pager>
          <Tool label="Previous sheet" $w={44}><Svg w={11} h={18} stroke="#8d9093"><path d="M10 1 2 9l8 8" /></Svg></Tool>
          <Tool label="Next sheet" $w={44}><Svg w={11} h={18} stroke="#8d9093"><path d="m1 1 8 8-8 8" /></Svg></Tool>
        </Pager>
        <ActiveTab><Underlined>Overview</Underlined></ActiveTab>
        <Rule $h={34} />
        <SheetTab>Courses</SheetTab>
        <SheetTab>Users</SheetTab>
        <SheetTab>Timeline</SheetTab>
        <NewSheet aria-label="New sheet"><Svg w={21} h={21}><path d="M10 0v21M0 10h21" /></Svg></NewSheet>
        <ScrollDots><Dots /></ScrollDots>
        <HScroll>
          <Triangle d="M2 7 12 1v12z" />
          <Rail><Thumb $size={92} /></Rail>
          <Triangle d="M12 7 2 1v12z" />
        </HScroll>
      </Footer>
    </Window>
  );
};

export default App;
